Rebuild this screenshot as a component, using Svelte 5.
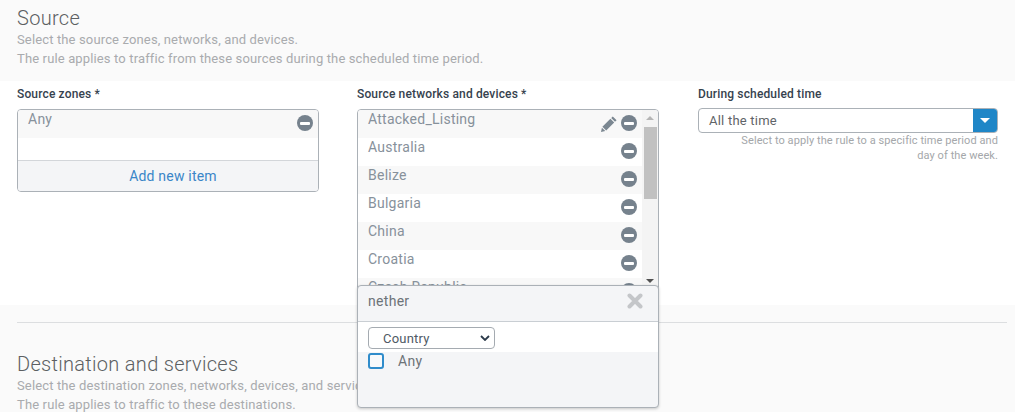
<script lang="ts">
  const networks = [
    "Attacked_Listing",
    "Australia",
    "Belize",
    "Bulgaria",
    "China",
    "Croatia",
    "Czech Republic",
  ];
</script>

<div class="page">
  <!-- Source header -->
  <section class="head source-head">
    <h2>Source</h2>
    <p>Select the source zones, networks, and devices.</p>
    <p>The rule applies to traffic from these sources during the scheduled time period.</p>
  </section>

  <section class="fields">
    <div class="field">
      <div class="label">Source zones *</div>
      <div class="box">
        <div class="zone-rows">
          <div class="row">
            <span class="row-text">Any</span>
            <span class="remove"></span>
          </div>
        </div>
        <div class="add">Add new item</div>
      </div>
    </div>

    <div class="field networks">
      <div class="label">Source networks and devices *</div>
      <div class="box list-box">
        <div class="list">
          {#each networks as name, i}
            <div class="row">
              <span class="row-text">{name}</span>
              {#if i === 0}
                <svg class="pencil" viewBox="0 0 16 16" width="16" height="16">
                  <path d="M11.8 0.4 L15.6 4.2 L14 5.8 L10.2 2 Z M9.4 2.8 L13.2 6.6 L5.2 14.6 L1.4 10.8 Z M0.9 11.7 L4.3 15.1 L0 16 Z" fill="#7b8791" />
                </svg>
              {/if}
              <span class="remove"></span>
            </div>
          {/each}
        </div>
        <div class="scrollbar">
          <span class="arrow up"></span>
          <div class="thumb"></div>
          <span class="arrow down"></span>
        </div>
      </div>

      <!-- Search popup -->
      <div class="popup">
        <div class="popup-search">
          <span>nether</span>
          <svg viewBox="0 0 16 16" width="16" height="16">
            <path d="M2.5 2.5 L13.5 13.5 M13.5 2.5 L2.5 13.5" stroke="#c4c6c9" stroke-width="4" stroke-linecap="round" />
          </svg>
        </div>
        <div class="popup-filter">
          <div class="fake-select">
            <span>Country</span>
            <svg viewBox="0 0 10 6" width="10" height="6">
              <path d="M1 1 L5 5 L9 1" fill="none" stroke="#2b3a4a" stroke-width="1.8" />
            </svg>
          </div>
        </div>
        <div class="popup-body">
          <span class="check"></span>
          <span>Any</span>
        </div>
      </div>
    </div>

    <div class="field time">
      <div class="label">During scheduled time</div>
      <div class="combo">
        <span class="combo-text">All the time</span>
        <span class="combo-btn"></span>
      </div>
      <div class="hint">Select to apply the rule to a specific time period and day of the week.</div>
    </div>
  </section>

  <!-- Destination -->
  <section class="dest">
    <hr />
    <div class="head">
      <h2>Destination and services</h2>
      <p>Select the destination zones, networks, devices, and services.</p>
      <p>The rule applies to traffic to these destinations.</p>
    </div>
  </section>
</div>

<style>
  :global(body) {
    margin: 0;
    background: #fafafa;
  }
  .page {
    width: 1015px;
    height: 412px;
    overflow: hidden;
    font-family: Roboto, "Liberation Sans", sans-serif;
    background: #fafafa;
  }
  .head h2 {
    margin: 0;
    font-size: 20px;
    line-height: 24px;
    font-weight: 300;
    color: #5c5f62;
    letter-spacing: 0.3px;
  }
  .head p {
    margin: 0;
    font-size: 13px;
    line-height: 19px;
    color: #a9abae;
    letter-spacing: 0.14px;
  }
  .source-head {
    height: 81px;
    box-sizing: border-box;
    padding: 6px 17px 0;
  }
  .fields {
    position: relative;
    z-index: 1;
    height: 224px;
    background: #fff;
    display: grid;
    grid-template-columns: 302px 302px 302px;
    column-gap: 38px;
    padding: 0 0 0 17px;
    box-sizing: border-box;
  }
  .field {
    min-width: 0;
    position: relative;
  }
  .field.time {
    margin-left: 1px;
  }
  .label {
    height: 28px;
    line-height: 27px;
    font-size: 12px;
    font-weight: 500;
    color: #36424e;
    letter-spacing: 0.15px;
  }
  .box {
    border: 1px solid #abb1b7;
    border-radius: 4px;
    box-sizing: border-box;
    overflow: hidden;
    background: #fff;
  }
  .zone-rows {
    height: 50px;
  }
  .row {
    height: 28px;
    display: flex;
    align-items: flex-start;
    padding: 0 5px 0 10px;
    box-sizing: border-box;
    font-size: 14px;
    line-height: 18px;
    color: #87919b;
    background: #fff;
    letter-spacing: 0.25px;
  }
  .row:nth-child(odd) {
    background: #f8f8f8;
  }
  .row-text {
    flex: 1;
  }
  .remove {
    width: 16px;
    height: 16px;
    margin-top: 5px;
    border-radius: 50%;
    background: #76828d;
    position: relative;
    flex: none;
  }
  .remove::after {
    content: "";
    position: absolute;
    left: 3px;
    right: 3px;
    top: 6.5px;
    height: 3px;
    border-radius: 1px;
    background: #fff;
  }
  .add {
    height: 31px;
    box-sizing: border-box;
    line-height: 30px;
    padding-left: 10px;
    text-align: center;
    font-size: 14px;
    color: #3a86c8;
    background: #f4f5f7;
    border-top: 1px solid #d3d6da;
    letter-spacing: 0.2px;
  }
  .list-box {
    height: 190px;
    display: flex;
  }
  .list {
    flex: 1;
    min-width: 0;
  }
  .pencil {
    margin: 6px 4px 0 0;
    flex: none;
  }
  .scrollbar {
    width: 16px;
    background: #f4f4f4;
    display: flex;
    flex-direction: column;
    align-items: center;
    flex: none;
  }
  .arrow {
    width: 0;
    height: 0;
    border-left: 4px solid transparent;
    border-right: 4px solid transparent;
  }
  .arrow.up {
    margin-top: 6px;
    border-bottom: 4px solid #b5b5b5;
  }
  .arrow.down {
    margin-top: 80px;
    border-top: 4px solid #505050;
  }
  .thumb {
    width: 13px;
    height: 72px;
    margin-top: 7px;
    background: #c1c1c1;
  }
  .popup {
    position: absolute;
    left: 0;
    top: 204px;
    width: 302px;
    height: 123px;
    box-sizing: border-box;
    border: 1px solid #abb1b7;
    border-radius: 4px;
    background: #f4f5f7;
    box-shadow: 0 1px 3px rgba(0, 0, 0, 0.2);
    overflow: hidden;
    z-index: 2;
    font-size: 14px;
    color: #6d7378;
  }
  .popup-search {
    height: 36px;
    display: flex;
    align-items: center;
    justify-content: space-between;
    padding: 0 15px 5px 10px;
    box-sizing: border-box;
    border-bottom: 1px solid #c9ced3;
    letter-spacing: 0.3px;
  }
  .popup-filter {
    height: 30px;
    background: #fff;
    padding-top: 5px;
    padding-left: 10px;
    box-sizing: border-box;
  }
  .fake-select {
    width: 127px;
    height: 22px;
    box-sizing: border-box;
    border: 1px solid #a5abb1;
    border-radius: 4px;
    display: flex;
    align-items: center;
    justify-content: space-between;
    padding: 0 4px 0 14px;
    font-size: 13px;
    color: #4f5a66;
    letter-spacing: 0.2px;
  }
  .popup-body {
    display: flex;
    align-items: flex-start;
    gap: 14px;
    padding: 0 10px;
    height: 18px;
    line-height: 18px;
    letter-spacing: 0.3px;
  }
  .check {
    width: 16px;
    height: 16px;
    margin-top: 1px;
    box-sizing: border-box;
    border: 2px solid #2f8ccb;
    border-radius: 3px;
    background: #f7f9fb;
    flex: none;
  }
  .combo {
    width: 300px;
    height: 25px;
    margin-top: -1px;
    box-sizing: border-box;
    border: 1px solid #abb1b7;
    border-radius: 4px;
    display: flex;
    overflow: hidden;
    background: #fff;
  }
  .combo-text {
    flex: 1;
    padding-left: 10px;
    font-size: 13px;
    line-height: 24px;
    color: #5f6468;
    letter-spacing: 0.22px;
  }
  .combo-btn {
    width: 25px;
    margin: -1px -1px -1px 0;
    background: #1f86c7;
    position: relative;
  }
  .combo-btn::after {
    content: "";
    position: absolute;
    left: 7px;
    top: 10px;
    border-left: 5px solid transparent;
    border-right: 5px solid transparent;
    border-top: 5px solid #fff;
  }
  .hint {
    width: 300px;
    padding-left: 30px;
    box-sizing: border-box;
    text-align: right;
    font-size: 11px;
    line-height: 15px;
    color: #a4a7aa;
    letter-spacing: 0.08px;
  }
  .dest {
    padding: 17px 8px 0 17px;
  }
  .dest hr {
    margin: 0;
    border: none;
    border-top: 1px solid #dcdee0;
  }
  .dest .head {
    padding-top: 29px;
  }
</style>
